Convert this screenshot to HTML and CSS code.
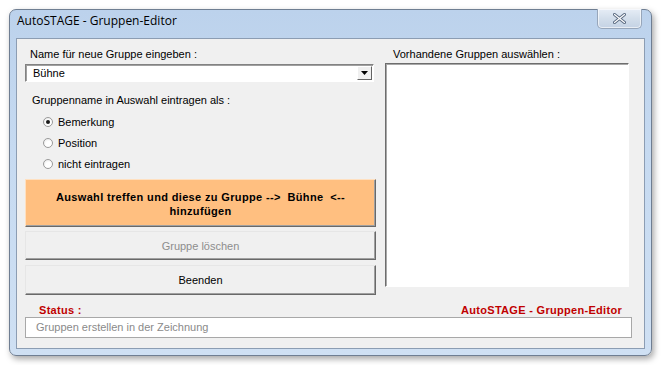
FILE: index.html
```html
<!DOCTYPE html>
<html lang="de">

<head>
    <meta charset="UTF-8">
    <title>AutoSTAGE - Gruppen-Editor</title>
    <link rel="stylesheet" href="styles.css">
</head>

<body>
    <div class="window">
        <div class="titlebar">
            <span class="title">AutoSTAGE - Gruppen-Editor</span>
            <button class="close-btn" type="button">
                <svg width="13" height="11" viewBox="0 0 13 11">
                    <path d="M1.5 1.5 L11.5 9.5 M11.5 1.5 L1.5 9.5" stroke="#5a6a80" stroke-width="3" stroke-linecap="round"/>
                    <path d="M1.5 1.5 L11.5 9.5 M11.5 1.5 L1.5 9.5" stroke="#ffffff" stroke-width="1.2" stroke-linecap="round"/>
                </svg>
            </button>
        </div>

        <div class="client">
            <div class="columns">
                <div class="left">
                    <label class="caption" for="group-name">Name für neue Gruppe eingeben :</label>
                    <div class="combo">
                        <span class="combo-value" id="group-name">Bühne</span>
                        <span class="combo-arrow">
                            <svg width="7" height="4" viewBox="0 0 7 4"><path d="M0 0 H7 L3.5 4 Z" fill="#000"/></svg>
                        </span>
                    </div>

                    <div class="caption indent">Gruppenname in Auswahl eintragen als :</div>
                    <div class="radios">
                        <label class="radio"><span class="dot checked"></span>Bemerkung</label>
                        <label class="radio"><span class="dot"></span>Position</label>
                        <label class="radio"><span class="dot"></span>nicht eintragen</label>
                    </div>

                    <button class="btn btn-add" type="button">Auswahl treffen und diese zu Gruppe --&gt;&nbsp; Bühne &nbsp;&lt;--<br>hinzufügen</button>
                    <button class="btn btn-delete" type="button" disabled>Gruppe löschen</button>
                    <button class="btn btn-exit" type="button">Beenden</button>
                </div>

                <div class="right">
                    <div class="caption">Vorhandene Gruppen auswählen :</div>
                    <div class="listbox"></div>
                </div>
            </div>

            <div class="status-head">
                <span>Status :</span>
                <span>AutoSTAGE - Gruppen-Editor</span>
            </div>
            <div class="status-box">Gruppen erstellen in der Zeichnung</div>
        </div>
    </div>
</body>

</html>
```

FILE: styles.css
```css
body {
    margin: 0;
    padding: 9px;
    background: #ffffff;
    font-family: 'Liberation Sans', Arial, sans-serif;
    font-size: 11px;
    color: #000;
}

.window {
    width: 641px;
    height: 345px;
    border: 1px solid #6f7e92;
    border-radius: 7px;
    background: linear-gradient(to bottom, #bcd2ec 0%, #c6daf1 40%, #cfe0f3 100%);
    box-shadow: 2px 3px 6px rgba(0, 0, 0, 0.35);
    display: flex;
    flex-direction: column;
}

.titlebar {
    height: 28px;
    display: flex;
    align-items: flex-start;
    justify-content: space-between;
    padding-left: 7px;
}

.title {
    font-family: 'Open Sans', 'DejaVu Sans', sans-serif;
    font-size: 12px;
    line-height: 22px;
    color: #000;
}

.close-btn {
    width: 45px;
    height: 20px;
    margin-right: 9px;
    margin-top: -1px;
    padding: 0;
    border: 1px solid #97a6ba;
    border-top: none;
    border-radius: 0 0 5px 5px;
    background: linear-gradient(to bottom, #e6edf6, #d3deeb 50%, #c4d2e4);
    box-shadow: inset 0 0 0 1px rgba(255, 255, 255, 0.6);
    display: flex;
    align-items: center;
    justify-content: center;
}

.client {
    flex: 1;
    margin: 0 6px 6px 6px;
    border: 1px solid #8c9db3;
    background: #f0f0f0;
    padding: 0 12px 0 8px;
    display: flex;
    flex-direction: column;
}

.columns {
    display: flex;
    gap: 9px;
    height: 258px;
}

.left {
    width: 351px;
    display: flex;
    flex-direction: column;
}

.caption {
    display: block;
    height: 17px;
    line-height: 17px;
    margin-top: 7px;
    padding-left: 5px;
    color: #000;
}

.combo {
    height: 16px;
    border: 1px solid;
    border-color: #828282 #ffffff #ffffff #828282;
    box-shadow: inset 1px 1px 0 #a0a0a0;
    background: #fff;
    display: flex;
    align-items: center;
    justify-content: space-between;
    margin-top: 1px;
    width: 347px;
}

.combo-value {
    padding-left: 7px;
}

.combo-arrow {
    width: 15px;
    height: 14px;
    margin-right: 1px;
    background: #f0f0f0;
    border: 1px solid;
    border-color: #ffffff #646464 #646464 #ffffff;
    box-sizing: border-box;
    display: flex;
    align-items: center;
    justify-content: center;
}

.indent {
    margin-top: 10px;
    padding-left: 7px;
}

.radios {
    display: flex;
    flex-direction: column;
    padding-left: 18px;
    margin-top: 2px;
}

.radio {
    height: 21px;
    display: flex;
    align-items: center;
}

.dot {
    width: 10px;
    height: 10px;
    border-radius: 50%;
    border: 1px solid #9a9a9a;
    background: radial-gradient(circle at 60% 65%, #ffffff 40%, #e4e4e4 100%);
    margin-right: 5px;
    position: relative;
    box-sizing: border-box;
}

.dot.checked::after {
    content: "";
    position: absolute;
    left: 2px;
    top: 2px;
    width: 4px;
    height: 4px;
    border-radius: 50%;
    background: #1a1a1a;
}

.btn {
    width: 351px;
    font-family: 'Liberation Sans', Arial, sans-serif;
    font-size: 11px;
    border: 1px solid;
    border-color: #e6e6e6 #696969 #696969 #e6e6e6;
    background: #f0f0f0;
    color: #000;
    padding: 0;
    box-shadow: inset -1px -1px 0 #a0a0a0;
}

.btn-add {
    height: 48px;
    margin-top: 5px;
    background: #ffbf80;
    border-color: #ffe0c0 #696969 #696969 #ffe0c0;
    font-weight: bold;
    letter-spacing: 0.35px;
    line-height: 14px;
    padding-top: 1px;
}

.btn-delete {
    height: 29px;
    margin-top: 4px;
    color: #8d8d8d;
}

.btn-exit {
    height: 30px;
    margin-top: 5px;
}

.right {
    width: 244px;
    display: flex;
    flex-direction: column;
}

.right .caption {
    padding-left: 8px;
}

.listbox {
    height: 222px;
    border: 1px solid;
    border-color: #6d6d6d #ffffff #ffffff #6d6d6d;
    box-shadow: inset 1px 1px 0 #a8a8a8;
    background: #fff;
}

.status-head {
    display: flex;
    justify-content: space-between;
    color: #c00000;
    font-weight: bold;
    font-size: 11px;
    letter-spacing: 0.3px;
    padding: 0 10px 0 14px;
    margin-top: 6px;
    height: 14px;
    line-height: 14px;
}

.status-box {
    width: 595px;
    height: 19px;
    line-height: 19px;
    border: 1px solid #a8a8a8;
    background: #fff;
    color: #8a8a8a;
    padding-left: 10px;
}
```
